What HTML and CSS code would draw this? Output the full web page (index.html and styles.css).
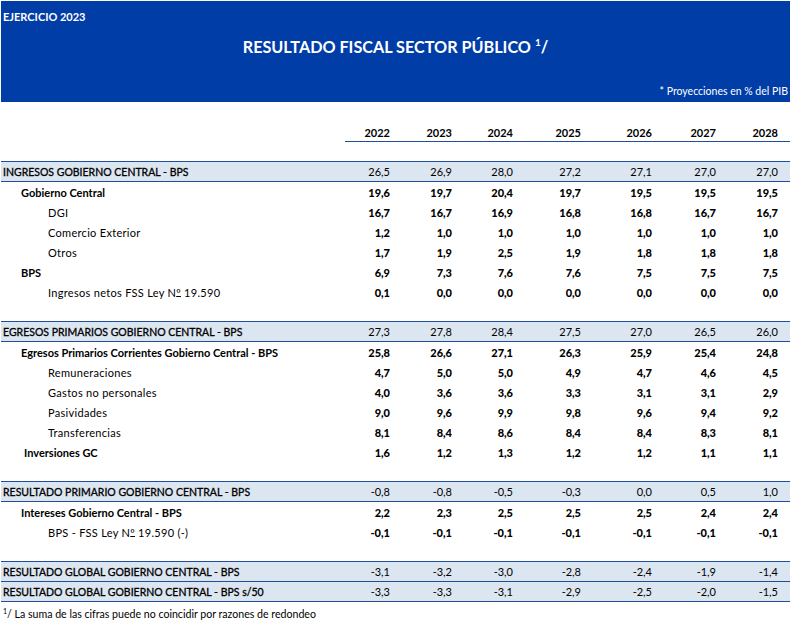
FILE: index.html
```html
<!DOCTYPE html>
<html lang="es">
<head>
<meta charset="utf-8">
<title>Resultado Fiscal Sector Público</title>
<link rel="stylesheet" href="styles.css">
</head>
<body>
<div class="page">
  <header class="banner">
    <div class="ejercicio">EJERCICIO 2023</div>
    <h1 class="title">RESULTADO FISCAL SECTOR PÚBLICO <sup>1</sup>/</h1>
    <div class="note">* Proyecciones en % del PIB</div>
  </header>

  <div class="table">
    <div class="row years">
      <div class="label"></div>
      <div class="num">2022</div><div class="num">2023</div><div class="num">2024</div><div class="num">2025</div><div class="num">2026</div><div class="num">2027</div><div class="num">2028</div>
    </div>
    <div class="row blank"></div>

    <div class="row band">
      <div class="label">INGRESOS GOBIERNO CENTRAL - BPS</div>
      <div class="num">26,5</div><div class="num">26,9</div><div class="num">28,0</div><div class="num">27,2</div><div class="num">27,1</div><div class="num">27,0</div><div class="num">27,0</div>
    </div>
    <div class="row l1">
      <div class="label">Gobierno Central</div>
      <div class="num">19,6</div><div class="num">19,7</div><div class="num">20,4</div><div class="num">19,7</div><div class="num">19,5</div><div class="num">19,5</div><div class="num">19,5</div>
    </div>
    <div class="row l2">
      <div class="label">DGI</div>
      <div class="num">16,7</div><div class="num">16,7</div><div class="num">16,9</div><div class="num">16,8</div><div class="num">16,8</div><div class="num">16,7</div><div class="num">16,7</div>
    </div>
    <div class="row l2">
      <div class="label">Comercio Exterior</div>
      <div class="num">1,2</div><div class="num">1,0</div><div class="num">1,0</div><div class="num">1,0</div><div class="num">1,0</div><div class="num">1,0</div><div class="num">1,0</div>
    </div>
    <div class="row l2">
      <div class="label">Otros</div>
      <div class="num">1,7</div><div class="num">1,9</div><div class="num">2,5</div><div class="num">1,9</div><div class="num">1,8</div><div class="num">1,8</div><div class="num">1,8</div>
    </div>
    <div class="row l1">
      <div class="label">BPS</div>
      <div class="num">6,9</div><div class="num">7,3</div><div class="num">7,6</div><div class="num">7,6</div><div class="num">7,5</div><div class="num">7,5</div><div class="num">7,5</div>
    </div>
    <div class="row l2">
      <div class="label">Ingresos netos FSS Ley N<u>º</u> 19.590</div>
      <div class="num">0,1</div><div class="num">0,0</div><div class="num">0,0</div><div class="num">0,0</div><div class="num">0,0</div><div class="num">0,0</div><div class="num">0,0</div>
    </div>
    <div class="row blank"></div>

    <div class="row band">
      <div class="label">EGRESOS PRIMARIOS GOBIERNO CENTRAL - BPS</div>
      <div class="num">27,3</div><div class="num">27,8</div><div class="num">28,4</div><div class="num">27,5</div><div class="num">27,0</div><div class="num">26,5</div><div class="num">26,0</div>
    </div>
    <div class="row l1">
      <div class="label">Egresos Primarios Corrientes Gobierno Central - BPS</div>
      <div class="num">25,8</div><div class="num">26,6</div><div class="num">27,1</div><div class="num">26,3</div><div class="num">25,9</div><div class="num">25,4</div><div class="num">24,8</div>
    </div>
    <div class="row l2">
      <div class="label">Remuneraciones</div>
      <div class="num">4,7</div><div class="num">5,0</div><div class="num">5,0</div><div class="num">4,9</div><div class="num">4,7</div><div class="num">4,6</div><div class="num">4,5</div>
    </div>
    <div class="row l2">
      <div class="label">Gastos no personales</div>
      <div class="num">4,0</div><div class="num">3,6</div><div class="num">3,6</div><div class="num">3,3</div><div class="num">3,1</div><div class="num">3,1</div><div class="num">2,9</div>
    </div>
    <div class="row l2">
      <div class="label">Pasividades</div>
      <div class="num">9,0</div><div class="num">9,6</div><div class="num">9,9</div><div class="num">9,8</div><div class="num">9,6</div><div class="num">9,4</div><div class="num">9,2</div>
    </div>
    <div class="row l2">
      <div class="label">Transferencias</div>
      <div class="num">8,1</div><div class="num">8,4</div><div class="num">8,6</div><div class="num">8,4</div><div class="num">8,4</div><div class="num">8,3</div><div class="num">8,1</div>
    </div>
    <div class="row l1 inv">
      <div class="label">Inversiones GC</div>
      <div class="num">1,6</div><div class="num">1,2</div><div class="num">1,3</div><div class="num">1,2</div><div class="num">1,2</div><div class="num">1,1</div><div class="num">1,1</div>
    </div>
    <div class="row blank"></div>

    <div class="row band">
      <div class="label">RESULTADO PRIMARIO GOBIERNO CENTRAL - BPS</div>
      <div class="num">-0,8</div><div class="num">-0,8</div><div class="num">-0,5</div><div class="num">-0,3</div><div class="num">0,0</div><div class="num">0,5</div><div class="num">1,0</div>
    </div>
    <div class="row l1">
      <div class="label">Intereses Gobierno Central - BPS</div>
      <div class="num">2,2</div><div class="num">2,3</div><div class="num">2,5</div><div class="num">2,5</div><div class="num">2,5</div><div class="num">2,4</div><div class="num">2,4</div>
    </div>
    <div class="row l2">
      <div class="label">BPS - FSS Ley N<u>º</u> 19.590 (-)</div>
      <div class="num">-0,1</div><div class="num">-0,1</div><div class="num">-0,1</div><div class="num">-0,1</div><div class="num">-0,1</div><div class="num">-0,1</div><div class="num">-0,1</div>
    </div>
    <div class="row blank"></div>

    <div class="row band">
      <div class="label">RESULTADO GLOBAL GOBIERNO CENTRAL - BPS</div>
      <div class="num">-3,1</div><div class="num">-3,2</div><div class="num">-3,0</div><div class="num">-2,8</div><div class="num">-2,4</div><div class="num">-1,9</div><div class="num">-1,4</div>
    </div>
    <div class="row band next">
      <div class="label">RESULTADO GLOBAL GOBIERNO CENTRAL - BPS s/50</div>
      <div class="num">-3,3</div><div class="num">-3,3</div><div class="num">-3,1</div><div class="num">-2,9</div><div class="num">-2,5</div><div class="num">-2,0</div><div class="num">-1,5</div>
    </div>
  </div>

  <p class="footnote"><sup>1</sup>/ La suma de las cifras puede no coincidir por razones de redondeo</p>
</div>
</body>
</html>
```

FILE: styles.css
```css
* { box-sizing: border-box; }

html, body {
  margin: 0;
  padding: 0;
  background: #ffffff;
}

body {
  font-family: "Lato", "Liberation Sans", sans-serif;
  color: #000000;
  font-size: 11px;
}

.page {
  padding: 1px 0 0 1px;
  width: 790px;
}

.banner {
  background: #003da6;
  color: #ffffff;
  height: 101px;
  width: 789px;
  display: flex;
  flex-direction: column;
}

.ejercicio {
  font-weight: 700;
  font-size: 11px;
  padding: 9px 0 0 2px;
  line-height: 13px;
}

.title {
  margin: 14px 0 0 0;
  font-size: 16.2px;
  font-weight: 700;
  text-align: center;
  line-height: 20px;
}

.title sup {
  font-size: 10px;
  vertical-align: 7px;
  line-height: 0;
}

.note {
  margin-top: auto;
  padding: 0 2px 5px 0;
  text-align: right;
  font-size: 10.5px;
  line-height: 12px;
}

.table {
  margin-top: 19px;
  display: flex;
  flex-direction: column;
}

.row {
  display: grid;
  grid-template-columns: 344px 57px 62px 61px 68px 71px 64px 62px;
  height: 20px;
  align-items: center;
}

.row .num {
  text-align: right;
  padding-right: 12px;
}

.row .label {
  white-space: nowrap;
}

.row .label u {
  text-decoration-thickness: 1px;
  text-underline-offset: -1px;
}

.row.years {
  height: 21px;
  align-items: stretch;
}

.row.years .num {
  font-weight: 700;
  border-bottom: 1px solid #1f4e9b;
  padding-top: 5px;
}

.row.blank {
  height: 19px;
}

.row.band {
  background: #dce6f1;
  border-top: 1px solid #1f4e9b;
  border-bottom: 1px solid #1f4e9b;
  height: 21px;
}

.row.band.next {
  border-top: none;
  height: 20px;
}

.row.band .label {
  padding-left: 2px;
  font-size: 10.5px;
  font-weight: 400;
  -webkit-text-stroke: 0.3px #000;
}

.row.l1 .label {
  padding-left: 20px;
  font-weight: 700;
}

.row.l1.inv .label {
  padding-left: 23px;
}

.row.l2 .label {
  padding-left: 47px;
  letter-spacing: 0.3px;
}

.row.l1 .num,
.row.l2 .num {
  font-weight: 900;
}

.footnote {
  margin: 0;
  padding: 6px 0 0 2px;
  font-size: 10.6px;
  line-height: 13px;
}

.footnote sup {
  font-size: 7px;
  vertical-align: 4px;
  line-height: 0;
}
```
